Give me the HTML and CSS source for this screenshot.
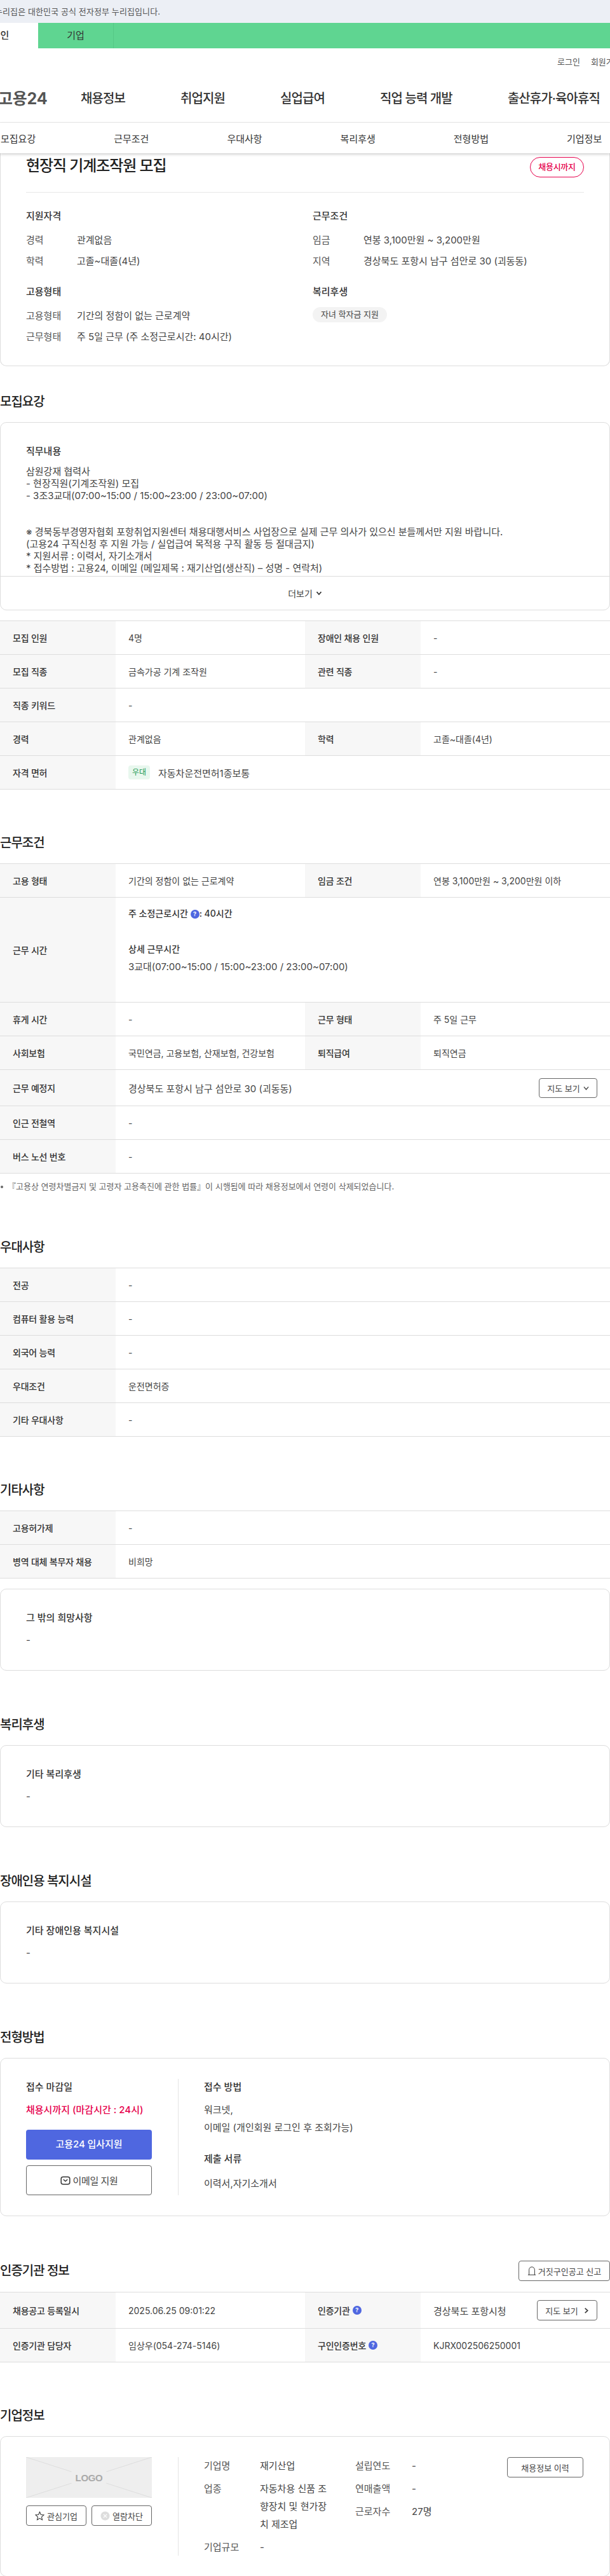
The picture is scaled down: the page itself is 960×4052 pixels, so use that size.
FILE: index.html
```html
<!DOCTYPE html>
<html lang="ko">
<head>
<meta charset="utf-8">
<title>현장직 기계조작원 모집 - 고용24</title>
<link rel="stylesheet" href="styles.css">
</head>
<body>
<div class="gov-bar"><span class="gov-text">누리집은 대한민국 공식 전자정부 누리집입니다.</span></div>
<div class="tabs">
  <a class="tab tab-on">개인</a>
  <a class="tab">기업</a>
</div>
<header class="header">
  <div class="util"><a>로그인</a><a>회원가입</a></div>
  <div class="nav-row">
    <a class="logo">고용24</a>
    <nav class="nav"><a>채용정보</a><a>취업지원</a><a>실업급여</a><a>직업 능력 개발</a><a>출산휴가·육아휴직</a></nav>
  </div>
</header>
<nav class="subnav"><a>모집요강</a><a>근무조건</a><a>우대사항</a><a>복리후생</a><a>전형방법</a><a>기업정보</a></nav>

<main>
  <article class="summary">
    <div class="summary-head">
      <h1 class="job-title">현장직 기계조작원 모집</h1>
      <span class="deadline">채용시까지</span>
    </div>
    <div class="summary-grid">
      <div class="sum-block">
        <h3 class="sum-title">지원자격</h3>
        <div class="sum-row"><span class="sum-k">경력</span><span class="sum-v">관계없음</span></div>
        <div class="sum-row"><span class="sum-k">학력</span><span class="sum-v">고졸~대졸(4년)</span></div>
      </div>
      <div class="sum-block">
        <h3 class="sum-title">근무조건</h3>
        <div class="sum-row"><span class="sum-k">임금</span><span class="sum-v">연봉 3,100만원 ~ 3,200만원</span></div>
        <div class="sum-row"><span class="sum-k">지역</span><span class="sum-v">경상북도 포항시 남구 섬안로 30 (괴동동)</span></div>
      </div>
      <div class="sum-block">
        <h3 class="sum-title">고용형태</h3>
        <div class="sum-row"><span class="sum-k">고용형태</span><span class="sum-v">기간의 정함이 없는 근로계약</span></div>
        <div class="sum-row"><span class="sum-k">근무형태</span><span class="sum-v">주 5일 근무 (주 소정근로시간: 40시간)</span></div>
      </div>
      <div class="sum-block">
        <h3 class="sum-title">복리후생</h3>
        <span class="chip">자녀 학자금 지원</span>
      </div>
    </div>
  </article>

  <section class="section section-first">
    <h2 class="sec-title">모집요강</h2>
    <div class="card">
      <div class="desc">
        <h3 class="card-title">직무내용</h3>
        <div class="desc-text">삼원강재 협력사
- 현장직원(기계조작원) 모집
- 3조3교대(07:00~15:00 / 15:00~23:00 / 23:00~07:00)


※ 경북동부경영자협회 포항취업지원센터 채용대행서비스 사업장으로 실제 근무 의사가 있으신 분들께서만 지원 바랍니다.
(고용24 구직신청 후 지원 가능 / 실업급여 목적용 구직 활동 등 절대금지)
* 지원서류 : 이력서, 자기소개서
* 접수방법 : 고용24, 이메일 (메일제목 : 재기산업(생산직) – 성명 - 연락처)</div>
      </div>
      <div class="more">더보기
        <svg class="more-ico" viewBox="0 0 10 10"><path d="M1.5 3 5 7 8.5 3"/></svg>
      </div>
    </div>
    <div class="table table-after-card">
      <div class="row"><div class="th">모집 인원</div><div class="td">4명</div><div class="th">장애인 채용 인원</div><div class="td">-</div></div>
      <div class="row"><div class="th">모집 직종</div><div class="td">금속가공 기계 조작원</div><div class="th">관련 직종</div><div class="td">-</div></div>
      <div class="row"><div class="th">직종 키워드</div><div class="td span3">-</div></div>
      <div class="row"><div class="th">경력</div><div class="td">관계없음</div><div class="th">학력</div><div class="td">고졸~대졸(4년)</div></div>
      <div class="row"><div class="th">자격 면허</div><div class="td td-lg span3"><span class="tag">우대</span>자동차운전면허1종보통</div></div>
    </div>
  </section>

  <section class="section section-tight">
    <h2 class="sec-title">근무조건</h2>
    <div class="table">
      <div class="row"><div class="th">고용 형태</div><div class="td">기간의 정함이 없는 근로계약</div><div class="th">임금 조건</div><div class="td">연봉 3,100만원 ~ 3,200만원 이하</div></div>
      <div class="row row-tall"><div class="th">근무 시간</div><div class="td span3 td-hours">
        <p class="hours-total">주 소정근로시간 <span class="q">?</span>: 40시간</p>
        <p class="hours-label">상세 근무시간</p>
        <p class="hours-text">3교대(07:00~15:00 / 15:00~23:00 / 23:00~07:00)</p>
      </div></div>
      <div class="row"><div class="th">휴게 시간</div><div class="td">-</div><div class="th">근무 형태</div><div class="td">주 5일 근무</div></div>
      <div class="row"><div class="th">사회보험</div><div class="td">국민연금, 고용보험, 산재보험, 건강보험</div><div class="th">퇴직급여</div><div class="td">퇴직연금</div></div>
      <div class="row row-btn"><div class="th">근무 예정지</div><div class="td td-lg span3 td-split">경상북도 포항시 남구 섬안로 30 (괴동동)
        <a class="btn btn-map">지도 보기<svg class="chev" viewBox="0 0 10 10"><path d="M1 3 5 7.5 9 3"/></svg></a></div></div>
      <div class="row"><div class="th">인근 전철역</div><div class="td span3">-</div></div>
      <div class="row"><div class="th">버스 노선 번호</div><div class="td span3">-</div></div>
    </div>
    <p class="note">『고용상 연령차별금지 및 고령자 고용촉진에 관한 법률』이 시행됨에 따라 채용정보에서 연령이 삭제되었습니다.</p>
  </section>

  <section class="section">
    <h2 class="sec-title">우대사항</h2>
    <div class="table">
      <div class="row"><div class="th">전공</div><div class="td span3">-</div></div>
      <div class="row"><div class="th">컴퓨터 활용 능력</div><div class="td span3">-</div></div>
      <div class="row"><div class="th">외국어 능력</div><div class="td span3">-</div></div>
      <div class="row"><div class="th">우대조건</div><div class="td span3">운전면허증</div></div>
      <div class="row"><div class="th">기타 우대사항</div><div class="td span3">-</div></div>
    </div>
  </section>

  <section class="section section-tight">
    <h2 class="sec-title">기타사항</h2>
    <div class="table">
      <div class="row"><div class="th">고용허가제</div><div class="td span3">-</div></div>
      <div class="row"><div class="th">병역 대체 복무자 채용</div><div class="td span3">비희망</div></div>
    </div>
    <div class="card card-note card-after-table">
      <h3 class="card-title">그 밖의 희망사항</h3>
      <p class="card-value">-</p>
    </div>
  </section>

  <section class="section">
    <h2 class="sec-title">복리후생</h2>
    <div class="card card-note">
      <h3 class="card-title">기타 복리후생</h3>
      <p class="card-value">-</p>
    </div>
  </section>

  <section class="section">
    <h2 class="sec-title">장애인용 복지시설</h2>
    <div class="card card-note">
      <h3 class="card-title">기타 장애인용 복지시설</h3>
      <p class="card-value">-</p>
    </div>
  </section>

  <section class="section">
    <h2 class="sec-title">전형방법</h2>
    <div class="card card-split">
      <div class="split-left">
        <h3 class="split-title">접수 마감일</h3>
        <p class="split-deadline">채용시까지 (마감시간 : 24시)</p>
        <a class="btn-apply">고용24 입사지원</a>
        <a class="btn-mail"><svg class="mail-ico" viewBox="0 0 16 16"><rect x="1.2" y="2.2" width="13.6" height="11.6" rx="3"/><path d="M4.8 6.2 8 9 11.2 6.2"/></svg>이메일 지원</a>
      </div>
      <div class="split-right">
        <h3 class="split-title">접수 방법</h3>
        <p class="split-text">워크넷,<br>이메일 (개인회원 로그인 후 조회가능)</p>
        <h3 class="split-title split-title-2">제출 서류</h3>
        <p class="split-text split-text-2">이력서,자기소개서</p>
      </div>
    </div>
  </section>

  <section class="section">
    <div class="sec-head">
      <h2 class="sec-title">인증기관 정보</h2>
      <a class="btn btn-report"><svg class="bell" viewBox="0 0 16 18"><path d="M1 16.2h14M3 16.2V7a5 5 0 0 1 10 0v9.2"/></svg>거짓구인공고 신고</a>
    </div>
    <div class="table">
      <div class="row row-btn"><div class="th">채용공고 등록일시</div><div class="td">2025.06.25 09:01:22</div><div class="th">인증기관 <span class="q">?</span></div><div class="td td-lg td-split">경상북도 포항시청
        <a class="btn btn-map btn-map-2">지도 보기<svg class="chev chev-r" viewBox="0 0 10 10"><path d="M3 1 7.5 5 3 9"/></svg></a></div></div>
      <div class="row"><div class="th">인증기관 담당자</div><div class="td">임상우(054-274-5146)</div><div class="th">구인인증번호 <span class="q">?</span></div><div class="td">KJRX002506250001</div></div>
    </div>
  </section>

  <section class="section section-tight">
    <h2 class="sec-title">기업정보</h2>
    <div class="card card-split card-company">
      <div class="split-left">
        <div class="logo-box">
          <svg class="logo-x" viewBox="0 0 199 64" preserveAspectRatio="none"><path d="M0 0 72 23M199 0 127 23M0 64 72 41M199 64 127 41"/></svg>
          <span class="logo-text">LOGO</span>
        </div>
        <div class="company-btns">
          <a class="btn btn-co"><svg class="star" viewBox="0 0 16 16"><path d="M8 1.3 10 5.9 15 6.4 11.2 9.7 12.3 14.6 8 12 3.7 14.6 4.8 9.7 1 6.4 6 5.9Z"/></svg>관심기업</a>
          <a class="btn btn-co"><svg class="xc" viewBox="0 0 16 16"><circle cx="8" cy="8" r="7.5"/><path d="M5.2 5.2 10.8 10.8M10.8 5.2 5.2 10.8"/></svg>열람차단</a>
        </div>
      </div>
      <div class="split-right co-right">
        <div class="co-col co-col-1">
          <div class="co-row"><span class="co-k">기업명</span><span class="co-v">재기산업</span></div>
          <div class="co-row"><span class="co-k">업종</span><span class="co-v">자동차용 신품 조향장치 및 현가장치 제조업</span></div>
          <div class="co-row"><span class="co-k">기업규모</span><span class="co-v">-</span></div>
        </div>
        <div class="co-col co-col-2">
          <div class="co-row"><span class="co-k">설립연도</span><span class="co-v">-</span></div>
          <div class="co-row"><span class="co-k">연매출액</span><span class="co-v">-</span></div>
          <div class="co-row"><span class="co-k">근로자수</span><span class="co-v">27명</span></div>
        </div>
        <a class="btn btn-history">채용정보 이력</a>
      </div>
    </div>
  </section>
</main>
</body>
</html>
```
FILE: styles.css
```css
* { box-sizing: border-box; }
html, body { margin: 0; padding: 0; }
body {
  width: 960px;
  height: 4052px;
  overflow: hidden;
  background: #fff;
  color: #333;
  font-family: Inter, "Noto Sans CJK KR", "Noto Sans", sans-serif;
  font-size: 15px;
}
h1, h2, h3, p { margin: 0; }
a { color: inherit; text-decoration: none; }

.gov-bar { height: 36px; background: #eceff5; line-height: 36px; font-size: 13px; color: #555; overflow: hidden; white-space: nowrap; letter-spacing: 0.1px; }
.gov-text { display: block; margin-left: -8px; }

.tabs { height: 40px; background: #5fd591; display: flex; margin-left: -59px; }
.tab { width: 119px; line-height: 40px; text-align: center; font-size: 15px; color: #333; border-right: 1px solid #55c885; }
.tab-on { background: #fff; font-weight: 500; border-right: 0; }

.header { height: 117px; border-bottom: 1px solid #e8e8e8; overflow: hidden; }
.util { display: flex; gap: 17px; padding-left: 877px; height: 40px; align-items: center; font-size: 13px; color: #555; white-space: nowrap; }
.nav-row { display: flex; align-items: center; height: 74px; margin-left: -3px; white-space: nowrap; }
.logo { flex: none; width: 130px; font-size: 25px; font-weight: 700; color: #555; letter-spacing: -0.2px; }
.nav { display: flex; gap: 87px; font-size: 20px; font-weight: 500; color: #333; letter-spacing: -0.9px; }

.subnav { position: relative; z-index: 2; height: 48px; display: flex; gap: 123px; padding-left: 1px; align-items: center; background: #fff; box-shadow: 0 2px 4px rgba(0,0,0,.18); font-size: 15px; color: #333; white-space: nowrap; }

.summary { height: 335px; border: 1px solid #ddd; border-top: 0; border-radius: 0 0 10px 10px; padding: 0 40px; }
.summary-head { display: flex; justify-content: space-between; align-items: flex-start; height: 62px; padding-top: 2px; border-bottom: 1px solid #e8e8e8; }
.job-title { font-size: 24px; line-height: 36px; font-weight: 500; color: #222; letter-spacing: -1.1px; }
.deadline { margin-top: 4px; width: 85px; height: 32px; border: 1px solid #e6004c; border-radius: 16px; color: #e6004c; text-align: center; line-height: 29px; font-size: 13px; font-weight: 500; letter-spacing: -0.3px; }
.summary-grid { display: grid; grid-template-columns: 451px 427px; padding-top: 26px; row-gap: 22px; }
.sum-block { height: 97px; }
.sum-title { font-size: 15px; line-height: 22px; font-weight: 500; color: #333; margin-bottom: 9px; }
.sum-row { display: flex; height: 33px; align-items: center; font-size: 15px; }
.sum-k { width: 80px; color: #555; }
.sum-v { color: #444; }
.chip { display: inline-block; height: 24px; margin-top: 4px; width: 117px; text-align: center; line-height: 23px; background: #f3f3f3; border-radius: 12px; font-size: 13px; color: #444; }

.section { margin-top: 70px; }
.section-tight { margin-top: 69px; }
.section-first { margin-top: 41px; }
.sec-title { height: 30px; line-height: 30px; margin-bottom: 17px; font-size: 20px; font-weight: 500; color: #222; letter-spacing: -1px; }
.sec-head { display: flex; justify-content: space-between; align-items: center; height: 32px; margin-bottom: 17px; }
.sec-head .sec-title { margin-bottom: 0; }

.card { border: 1px solid #ddd; border-radius: 10px; }
.desc { height: 241px; overflow: hidden; padding: 35px 40px 0; }
.card-title { font-size: 15px; line-height: 20px; font-weight: 500; color: #333; }
.desc-text { margin-top: 12px; font-size: 15px; line-height: 19px; white-space: pre-line; color: #444; }
.more { height: 53px; border-top: 1px solid #ddd; display: flex; align-items: center; justify-content: center; gap: 5px; font-size: 14px; color: #444; }
.more-ico { width: 10px; height: 10px; fill: none; stroke: #333; stroke-width: 1.8; }

.table { border-top: 1px solid #ddd; }
.table-after-card { margin-top: 16px; }
.row { display: grid; grid-template-columns: 182px 298px 182px 298px; min-height: 53px; border-bottom: 1px solid #ddd; }
.row-tall { min-height: 165px; }
.row-btn { min-height: 57px; }
.th { background: #f7f7f7; padding-left: 20px; display: flex; align-items: center; font-size: 14px; font-weight: 500; color: #333; letter-spacing: -0.2px; }
.th .q { margin-left: 4px; }
.td { padding-left: 20px; display: flex; align-items: center; font-size: 14px; color: #444; }
.td-lg { font-size: 15px; }
.span3 { grid-column: span 3; }
.td-split { justify-content: space-between; padding-right: 20px; white-space: nowrap; }
.td-hours { display: block; padding-top: 11px; line-height: 28px; }
.hours-total { font-weight: 500; color: #333; margin-bottom: 28px; }
.hours-label { font-weight: 500; color: #333; }
.hours-text { font-size: 15px; }
.tag { display: inline-block; width: 34px; height: 22px; margin-right: 13px; border-radius: 4px; background: #e8f7ee; color: #1e9a55; font-size: 12px; line-height: 21px; text-align: center; }
.q { display: inline-block; width: 14px; height: 14px; border-radius: 50%; background: #4f67e0; color: #fff; font-size: 9px; line-height: 14px; text-align: center; font-weight: 700; vertical-align: 1px; letter-spacing: 0; }

.btn { display: inline-flex; align-items: center; justify-content: center; border: 1px solid #666; border-radius: 4px; background: #fff; font-size: 13px; color: #444; white-space: nowrap; }
.btn-map { width: 92px; height: 31px; gap: 5px; }
.btn-map-2 { width: 95px; height: 32px; gap: 8px; }
.chev { width: 9px; height: 9px; fill: none; stroke: #333; stroke-width: 1.3; }
.chev-r { stroke-width: 1.8; }
.note { position: relative; margin-top: 10px; height: 21px; line-height: 21px; padding-left: 12px; font-size: 13px; color: #666; white-space: nowrap; }
.note::before { content: ""; position: absolute; left: 1px; top: 9px; width: 4px; height: 4px; border-radius: 50%; background: #666; }

.card-note { height: 129px; padding: 35px 40px 0; }
.card-after-table { margin-top: 16px; }
.card-value { margin-top: 10px; line-height: 30px; font-size: 15px; color: #444; }

.card-split { display: flex; height: 249px; padding: 32px 40px; }
.split-left { width: 240px; padding-right: 41px; border-right: 1px solid #e4e4e4; flex: none; }
.split-right { padding-left: 40px; flex: 1; }
.split-title { font-size: 15px; line-height: 26px; font-weight: 500; color: #333; }
.split-title-2 { margin-top: 22px; }
.split-deadline { margin-top: 10px; margin-bottom: 18px; line-height: 26px; font-size: 15px; color: #e6004c; font-weight: 500; white-space: nowrap; }
.btn-apply { display: block; height: 47px; margin-bottom: 9px; border-radius: 4px; background: #4f67e0; color: #fff; text-align: center; line-height: 46px; font-size: 15px; font-weight: 500; letter-spacing: -0.1px; }
.btn-mail { display: flex; height: 47px; border: 1px solid #666; border-radius: 4px; align-items: center; justify-content: center; gap: 4px; font-size: 15px; color: #444; letter-spacing: -0.4px; }
.mail-ico { width: 16px; height: 16px; fill: none; stroke: #333; stroke-width: 1.5; }
.split-text { margin-top: 9px; font-size: 15px; line-height: 28px; color: #444; }
.split-text-2 { margin-top: 12px; }

.btn-report { width: 144px; height: 32px; gap: 3px; }
.bell { width: 14px; height: 16px; fill: none; stroke: #333; stroke-width: 1.1; }

.card-company { height: 221px; }
.logo-box { position: relative; height: 64px; background: #eee; display: flex; align-items: center; justify-content: center; overflow: hidden; }
.logo-x { position: absolute; inset: 0; width: 100%; height: 100%; fill: none; stroke: #ddd; stroke-width: 1; }
.logo-text { position: relative; font-family: "Liberation Sans", sans-serif; font-size: 15px; font-weight: 700; color: #aaa; letter-spacing: -0.3px; }
.company-btns { display: flex; gap: 8px; margin-top: 12px; }
.btn-co { flex: 1; height: 32px; gap: 4px; }
.star { width: 15px; height: 15px; fill: none; stroke: #333; stroke-width: 1.1; }
.xc { width: 15px; height: 15px; }
.xc circle { fill: #ddd; }
.xc path { fill: none; stroke: #fff; stroke-width: 1.4; }

.co-right { display: flex; }
.co-col { display: flex; flex-direction: column; gap: 8px; }
.co-col-1 { width: 238px; }
.co-col-2 { width: 239px; }
.co-row { display: flex; font-size: 15px; line-height: 28px; }
.co-k { flex: none; width: 88px; color: #555; }
.co-col-2 .co-k { width: 89px; }
.co-v { width: 112px; word-break: break-all; color: #444; }
.btn-history { width: 120px; height: 32px; flex: none; }
```
